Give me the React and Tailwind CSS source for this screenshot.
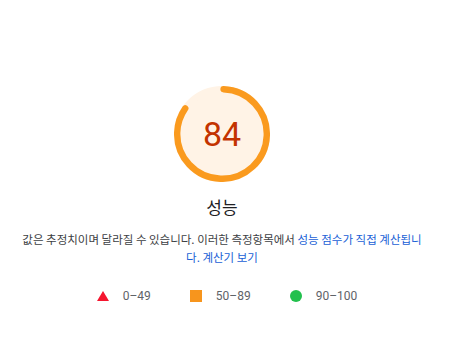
export default function App() {
  const score = 84;
  const r = 56;
  const circ = 2 * Math.PI * r;
  const arc = (circ * score) / 100;

  return (
    <div className="w-[470px] h-[343px] bg-white font-['Roboto','Noto_Sans_CJK_KR',sans-serif]">
      <div className="w-[444px] flex flex-col items-center pt-[86px]">
        {/* Gauge */}
        <div className="relative w-[96px] h-[96px]">
          <svg viewBox="0 0 120 120" className="w-[96px] h-[96px]">
            <circle cx="60" cy="60" r="56" fill="#fff3e6" stroke="#fff3e6" strokeWidth="8" />
            <circle
              cx="60"
              cy="60"
              r="56"
              fill="none"
              stroke="#fa9a1e"
              strokeWidth="8"
              strokeLinecap="round"
              strokeDasharray={`${arc} ${circ}`}
              transform="rotate(-88 60 60)"
            />
          </svg>
          <div className="absolute inset-0 flex items-center justify-center text-[34px] leading-none text-[#c33300]">
            {score}
          </div>
        </div>

        {/* Title */}
        <div className="mt-[15px] text-[17px] leading-[20px] font-normal text-[#202124] font-['Noto_Sans_CJK_KR',sans-serif]">성능</div>

        {/* Description */}
        <p className="mt-[13px] w-[404px] text-center text-[11.5px] leading-[18px] text-[#3c4043] font-['Noto_Sans_CJK_KR',sans-serif]">
          값은 추정치이며 달라질 수 있습니다. 이러한 측정항목에서{" "}
          <a className="text-[#1a5fd6]">성능 점수가 직접 계산됩니다.</a>{" "}
          <a className="text-[#1a5fd6]">계산기 보기</a>
        </p>

        {/* Legend */}
        <div className="mt-[21px] flex items-center text-[12px] text-[#5f6368] pl-[10px]">
          <div className="flex items-center gap-[14px]">
            <svg width="12" height="12" viewBox="0 0 12 12">
              <polygon points="6,1 12,11 0,11" fill="#f5162f" />
            </svg>
            <span>0–49</span>
          </div>
          <div className="flex items-center gap-[14px] ml-[39px]">
            <div className="w-[12px] h-[12px] bg-[#f7951d]" />
            <span>50–89</span>
          </div>
          <div className="flex items-center gap-[14px] ml-[39px]">
            <div className="w-[12px] h-[12px] rounded-full bg-[#22c04d]" />
            <span>90–100</span>
          </div>
        </div>
      </div>
    </div>
  );
}
